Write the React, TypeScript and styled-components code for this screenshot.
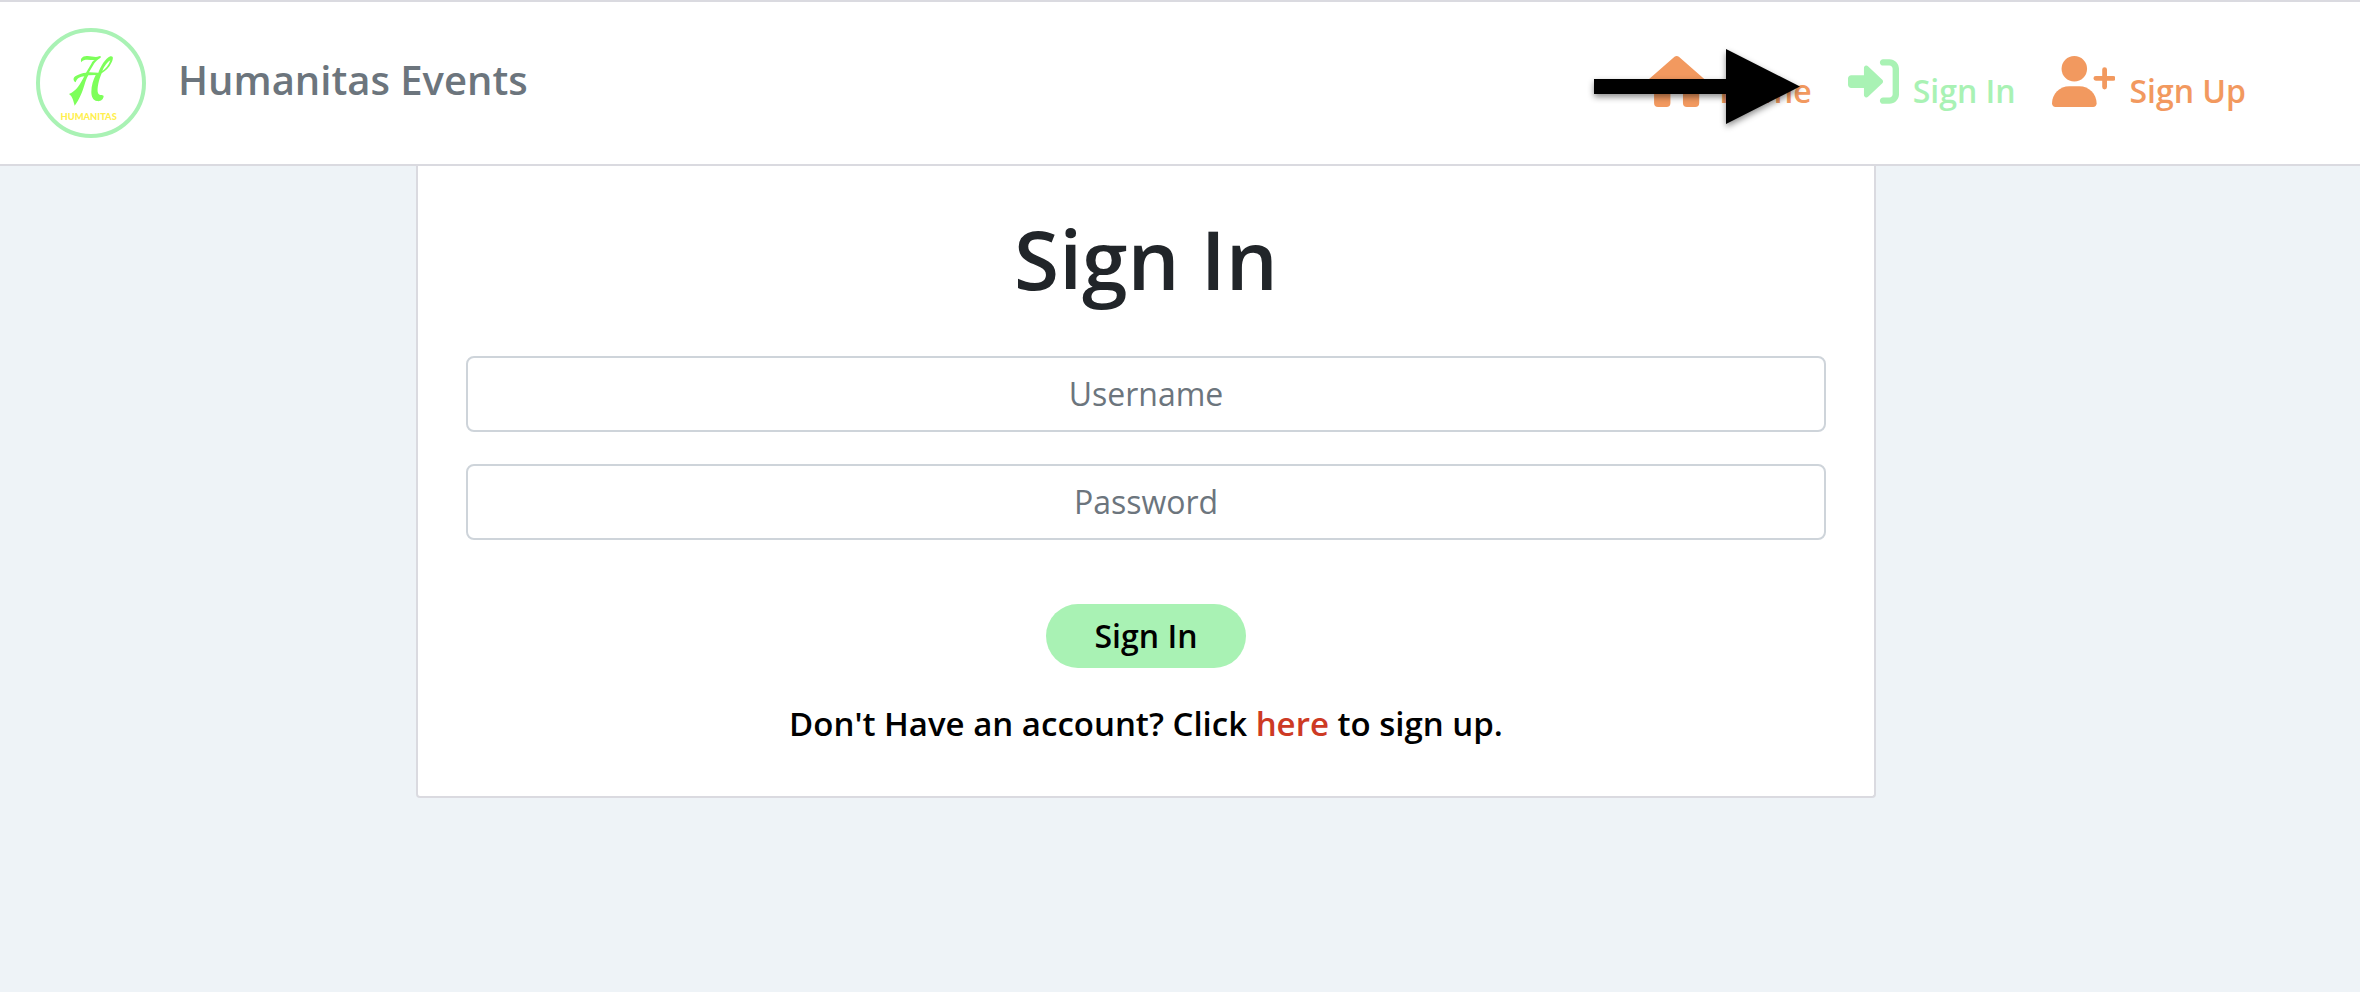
import React from "react";
import styled, { createGlobalStyle } from "styled-components";

const GlobalStyle = createGlobalStyle`
  *, *::before, *::after { box-sizing: border-box; }
  body {
    margin: 0;
    background: #eef3f7;
    color: #212529;
    font-family: "Open Sans", "Noto Sans", sans-serif;
    font-size: 32px;
    line-height: 48px;
  }
`;

const Header = styled.header`
  position: relative;
  display: flex;
  align-items: center;
  justify-content: space-between;
  padding: 26px 114px 26px 36px;
  background: #fff;
  border-top: 2px solid #dadae0;
  border-bottom: 2px solid #dadae0;
`;

const Brand = styled.a`
  display: flex;
  align-items: center;
  gap: 32px;
  color: #6c757d;
  font-size: 40px;
  font-weight: 600;
  text-decoration: none;
`;

const BrandName = styled.span`
  padding-bottom: 6px;
`;

const LogoRing = styled.span`
  display: block;
  width: 110px;
  height: 110px;
  border: 4px solid #a9f2b4;
  border-radius: 50%;
  svg { display: block; }
`;

const Nav = styled.nav`
  display: flex;
  gap: 36px;
  padding-top: 4px;
`;

const NavLink = styled.a<{ $active?: boolean }>`
  display: flex;
  align-items: flex-start;
  gap: 14px;
  color: ${(p) => (p.$active ? "#a9f2b4" : "#f2995f")};
  font-weight: 600;
  text-decoration: none;
  svg { height: 51px; fill: currentColor; }
  span { padding-top: 11px; }
`;

const Pointer = styled.svg`
  position: absolute;
  top: 40px;
  right: 554px;
  overflow: visible;
  filter: drop-shadow(0 3px 3px rgba(0, 0, 0, 0.45));
`;

const Main = styled.main`
  display: flex;
  justify-content: center;
  padding-right: 68px;
`;

const Card = styled.form`
  display: flex;
  flex-direction: column;
  align-items: center;
  width: 100%;
  max-width: 1460px;
  padding: 44px 48px 48px;
  background: #fff;
  border: 2px solid #dadae0;
  border-top: 0;
  border-radius: 0 0 4px 4px;
`;

const Title = styled.h1`
  margin: 0 0 50px;
  font-size: 82px;
  font-weight: 600;
  line-height: 96px;
`;

const Field = styled.input`
  width: 100%;
  height: 76px;
  margin-bottom: 32px;
  padding: 10px 24px 12px;
  border: 2px solid #ced4da;
  border-radius: 8px;
  background: #fff;
  color: #495057;
  font: inherit;
  text-align: center;
  &::placeholder { color: #6c757d; opacity: 1; }
`;

const Submit = styled.button`
  width: 200px;
  height: 64px;
  margin: 32px 0;
  padding: 0;
  border: 0;
  border-radius: 32px;
  background: #a9f2b4;
  color: #000;
  font: inherit;
  font-weight: 600;
`;

const Note = styled.p`
  margin: 0;
  color: #000;
  font-size: 33px;
  font-weight: 600;
  a { color: #cd3a24; text-decoration: none; }
`;

const Logo = () => (
  <svg width="102" height="102" viewBox="12 12 306 306" aria-hidden="true">
    <g transform="translate(-18 -24)">
      <path
        fill="#7dff5a"
        d="M154 127C150 116 156 109 170 108C184 107 195 114 207 109Q214 106 212 113C204 118 198 122 193 130L177 157L205 158C212 139 226 115 241 109C251 107 250 116 245 127C238 143 226 153 215 160C207 178 200 207 204 219C208 229 217 222 221 228C220 240 210 245 201 243C189 242 184 230 184 216C184 197 190 179 197 165L175 166C164 184 162 207 152 226C147 237 141 248 134 257C131 245 127 228 117 222C139 214 151 192 163 169C151 171 141 173 137 187C129 182 128 174 137 168C148 161 158 159 168 158L184 131C187 125 190 122 194 120C181 121 160 115 154 127ZM217 153C227 146 237 135 241 121C233 125 223 138 217 153Z"
      />
      <text x="176" y="300" textAnchor="middle" fill="#fff050" fontFamily="Lato, sans-serif" fontWeight="900" fontSize="28">
        HUMANITAS
      </text>
    </g>
  </svg>
);

const HomeIcon = () => (
  <svg viewBox="0 0 576 512" aria-hidden="true">
    <path d="M266 8Q288-8 310 8L565 231C585 250 574 288 544 288H514V472Q514 512 474 512H391Q351 512 351 472V352H225V472Q225 512 185 512H101Q61 512 61 472V288H32C2 288-9 250 11 231Z" />
  </svg>
);

const SignInIcon = () => (
  <svg viewBox="0 0 512 512" aria-hidden="true">
    <path d="M344.7 238.5l-144.1-136C193.7 95.97 183.4 94.17 174.6 97.95C165.8 101.8 160.1 110.4 160.1 120V192H32.02C14.33 192 0 206.3 0 224v64c0 17.68 14.33 32 32.02 32h128.1v72c0 9.578 5.707 18.25 14.51 22.05c8.803 3.781 19.03 1.984 26-4.594l144.1-136C354.3 264.4 354.3 247.6 344.7 238.5zM416 32h-64c-17.67 0-32 14.33-32 32s14.33 32 32 32h64c17.67 0 32 14.33 32 32v256c0 17.67-14.33 32-32 32h-64c-17.67 0-32 14.33-32 32s14.33 32 32 32h64c53.02 0 96-42.98 96-96V128C512 74.98 469 32 416 32z" />
  </svg>
);

const SignUpIcon = () => (
  <svg viewBox="0 0 640 512" aria-hidden="true">
    <circle cx="224" cy="128" r="128" />
    <path d="M274.7 304H173.3C77.6 304 0 381.6 0 477.3C0 496.5 15.5 512 34.7 512H413.3C432.5 512 448 496.5 448 477.3C448 381.6 370.4 304 274.7 304z" />
    <path d="M440 224H616M528 136V312" stroke="currentColor" strokeWidth="48" strokeLinecap="round" />
  </svg>
);

export default function App() {
  return (
    <>
      <GlobalStyle />
      <Header>
        <Brand href="#">
          <LogoRing>
            <Logo />
          </LogoRing>
          <BrandName>Humanitas Events</BrandName>
        </Brand>
        <Nav>
          <NavLink href="#home">
            <HomeIcon />
            <span>Home</span>
          </NavLink>
          <NavLink href="#signin" $active>
            <SignInIcon />
            <span>Sign In</span>
          </NavLink>
          <NavLink href="#signup">
            <SignUpIcon />
            <span>Sign Up</span>
          </NavLink>
        </Nav>
        <Pointer width="214" height="90" viewBox="0 0 214 90" aria-hidden="true">
          <path d="M2 37H134V7L208 44.500L134 82V52H2Z" />
        </Pointer>
      </Header>
      <Main>
        <Card onSubmit={(e) => e.preventDefault()}>
          <Title>Sign In</Title>
          <Field type="text" name="username" placeholder="Username" aria-label="Username" />
          <Field type="password" name="password" placeholder="Password" aria-label="Password" />
          <Submit type="submit">Sign In</Submit>
          <Note>
            Don't Have an account? Click <a href="#signup">here</a> to sign up.
          </Note>
        </Card>
      </Main>
    </>
  );
}
